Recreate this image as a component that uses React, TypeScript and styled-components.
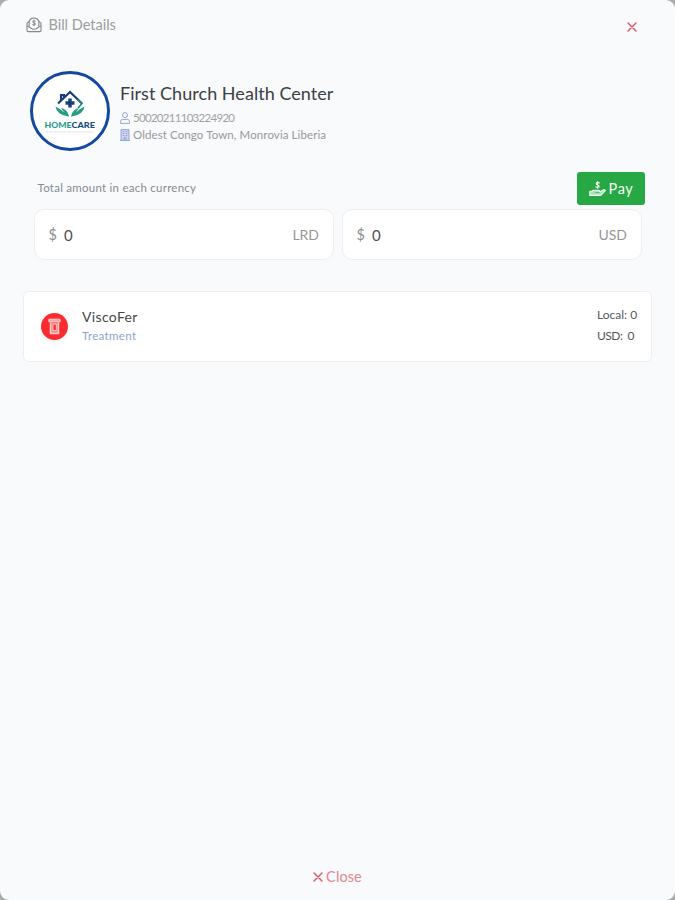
import React from 'react';
import styled, { createGlobalStyle } from 'styled-components';

const GlobalStyle = createGlobalStyle`
  * { box-sizing: border-box; }
  body { margin: 0; background: #a9abad; font-family: Lato, "Open Sans", sans-serif; }
  svg { display: block; flex: none; }
`;

const Modal = styled.main`
  width: 675px;
  height: 900px;
  display: flex;
  flex-direction: column;
  background: #f8fafc;
  border-radius: 9px;
  overflow: hidden;
`;

const Text = styled.span<{ $size: number; $color: string; $spacing?: number }>`
  margin: 0;
  font-size: ${p => p.$size}px;
  line-height: 1;
  color: ${p => p.$color};
  letter-spacing: ${p => p.$spacing ?? 0}px;
  font-weight: 400;
  white-space: pre;
`;

const Header = styled.header`
  height: 50px;
  display: flex;
  align-items: center;
  padding: 0 38px 0 26px;
  gap: 6.5px;
`;

const IconButton = styled.button`
  margin: 3px 0 0 auto;
  padding: 0;
  border: 0;
  background: none;
`;

const Provider = styled.section`
  height: 122px;
  padding: 21px 30px 0;
  display: flex;
  gap: 10px;
`;

const Avatar = styled.div`
  width: 80px;
  height: 80px;
  border-radius: 50%;
  border: 3px solid #1548a0;
  background: #fff;
  display: flex;
  justify-content: center;
  align-items: center;
`;

const ProviderInfo = styled.div`
  display: flex;
  flex-direction: column;
  padding-top: 13px;
`;

const InfoLine = styled.div<{ $top: number }>`
  height: 13px;
  margin-top: ${p => p.$top}px;
  display: flex;
  align-items: center;
  gap: 3px;
`;

const TotalsHeader = styled.div`
  height: 33px;
  padding: 0 30px 0 37.5px;
  display: flex;
  align-items: center;
  justify-content: space-between;
`;

const TotalsLabel = styled.div`
  display: flex;
  padding-bottom: 2px;
`;

const PayButton = styled.button`
  width: 68px;
  height: 33px;
  border: 0;
  border-radius: 3px;
  padding: 1px 0 0;
  font-family: inherit;
  background: #28a745;
  display: flex;
  align-items: center;
  justify-content: center;
  gap: 3px;
`;

const Totals = styled.div`
  display: grid;
  grid-template-columns: 1fr 1fr;
  gap: 8px;
  padding: 4px 33px 0 34px;
`;

const Amount = styled.div`
  height: 51px;
  display: flex;
  align-items: center;
  gap: 7px;
  padding: 1px 14px 0 13.5px;
  background: #fff;
  border: 1px solid #eceeef;
  border-radius: 10px;
`;

const Currency = styled.div`
  margin-left: auto;
  display: flex;
`;

const BillItem = styled.article`
  margin: 31px 23px 0;
  height: 71px;
  display: flex;
  align-items: center;
  padding: 0 14px 0 17px;
  background: #fff;
  border: 1px solid #eceeef;
  border-radius: 6px;
`;

const ItemBadge = styled.div`
  width: 27px;
  height: 27px;
  border-radius: 50%;
  background: #fb2c30;
  box-shadow: 0 2px 5px #0000000c;
  display: flex;
  align-items: center;
  justify-content: center;
`;

const ItemName = styled.div`
  margin-left: 14px;
  display: flex;
  flex-direction: column;
  gap: 6px;
  padding-bottom: 2px;
`;

const ItemPrices = styled.div`
  margin-left: auto;
  width: 40px;
  display: flex;
  flex-direction: column;
  gap: 9px;
  padding-bottom: 3px;
`;

const Footer = styled.footer`
  margin-top: auto;
  height: 46px;
  display: flex;
  justify-content: center;
  align-items: center;
  gap: 3px;
`;

const BillIcon = () => (
  <svg width="16" height="16" viewBox="0 0 16 16" fill="none" stroke="#85888b" strokeWidth="1.1" strokeLinejoin="round">
    <path d="M3.2 4.3 1 6.2v7.2q0 1.2 1.2 1.2h11.6q1.2 0 1.2-1.2V6.2l-2.2-1.9" />
    <path d="M1 8.7l5.5 3.2q1.5.8 3 0L15 8.7" />
    <path d="M3.2 9.5V4Q4.4 1 8 1t4.8 3v5.5" />
    <path d="M9.6 4.2C8.8 3.3 6.6 3.5 6.7 4.8c.1 1.4 2.8.8 2.8 2.2 0 1.3-2.2 1.4-3.1.5M8 2.8v6.3" strokeWidth="1" />
  </svg>
);

const CrossIcon = ({ size }: { size: number }) => (
  <svg width={size} height={size} viewBox="0 0 10 10" fill="none" stroke="#e2515f" strokeWidth="1.4" strokeLinecap="round">
    <path d="M1 1l8 8M9 1 1 9" />
  </svg>
);

const UserIcon = () => (
  <svg width="10" height="12" viewBox="0 0 10 12" fill="none" stroke="#8e9cd4" strokeWidth=".9">
    <circle cx="5" cy="3.1" r="2.5" />
    <path d="M.5 11.4V9.6q0-2.3 2.4-2.3Q5 8 7.1 7.3q2.4 0 2.4 2.3v1.8z" strokeLinejoin="round" />
  </svg>
);

const BuildingIcon = () => (
  <svg width="10" height="12" viewBox="0 0 10 12" fill="none" stroke="#8495cf" strokeWidth=".8">
    <path d="M0 11.5h10M1 11.5V.6h8v10.9" fill="#cdd5f0" />
    <path d="M2.7 2.5h1.5M5.8 2.5h1.5M2.7 4.5h1.5M5.8 4.5h1.5M2.7 6.5h1.5M5.8 6.5h1.5M4 11.5V8.7h2v2.8" />
  </svg>
);

const PayIcon = () => (
  <svg width="17" height="16" viewBox="0 0 17 16" fill="none" stroke="#f4fff6" strokeWidth="1.1" strokeLinecap="round" strokeLinejoin="round">
    <path d="M10.3 1.9C9.4 1 7.1 1.2 7.2 2.7c.1 1.6 3 1 3 2.6 0 1.4-2.4 1.5-3.3.6M8.7.6v6.6" />
    <path d="M.8 10.2h2.1l1.5-1h5q1.2.1 1.1 1.2-.1.9-1.2.9H7.1h3l4.5-2.5q1.4-.4 1.7.8l-4 4.4-1.2.4H.8z" fill="#f4fff6" fillOpacity=".65" />
    <path d="M6.5 11.4h3.8" stroke="#28a745" strokeWidth=".8" />
  </svg>
);

const JarIcon = () => (
  <svg width="13" height="17" viewBox="0 0 13 17" fill="none" stroke="#ffd0cc" strokeWidth="1.5">
    <path d="M.9 1.2h11.2v2.7H.9z" fill="#ffaaa5" strokeWidth="1" />
    <path d="M2.5 4.5v11h8v-11" fill="#ff8a87" />
    <path d="M5 6.2h3.3v6.3H5z" fill="#f33339" strokeWidth=".8" />
  </svg>
);

const HomecareLogo = () => (
  <svg width="54" height="46" viewBox="0 0 54 46">
    <path d="M15 15.5 27 4l12 11.5M18 13V7.2h3v3" fill="none" stroke="#193d76" strokeWidth="2.2" />
    <path d="M34.5 11.5 39 15.5l-4 4.5" fill="none" stroke="#218c86" strokeWidth="1.6" />
    <path d="M27 10.5v9M22.5 15h9" stroke="#17417c" strokeWidth="3.5" />
    <path d="M12.5 18.5q1 8.5 13.5 10.2-.8-5.4-5.4-8l-2.6-.4 3.5 4.4q-3.2-3.4-9-6.2zM41.5 18.5q-1 8.5-13.5 10.2.8-5.4 5.4-8l2.6-.4-3.5 4.4q3.2-3.4 9-6.2z" fill="#269b83" />
    <text x="1.5" y="40" textLength="27" lengthAdjust="spacingAndGlyphs" fontFamily="Lato" fontWeight="900" fontSize="8" fill="#279a8e">HOME</text>
    <text x="28.5" y="40" textLength="23.5" lengthAdjust="spacingAndGlyphs" fontFamily="Lato" fontWeight="900" fontSize="8" fill="#184b7d">CARE</text>
    <path d="M3 43.9h48" stroke="#cbd7df" strokeWidth=".9" strokeDasharray="2 .8 1 .6" />
  </svg>
);

export default function App() {
  return (
    <>
      <GlobalStyle />
      <Modal>
        <Header>
          <BillIcon />
          <Text $size={14.5} $color="#9b9da0">Bill Details</Text>
          <IconButton aria-label="Close dialog"><CrossIcon size={10} /></IconButton>
        </Header>
        <Provider>
          <Avatar><HomecareLogo /></Avatar>
          <ProviderInfo>
            <Text as="h1" $size={18} $color="#3d4043" $spacing={0.04}>First Church Health Center</Text>
            <InfoLine $top={9}>
              <UserIcon />
              <Text $size={11.5} $color="#a0a2a5" $spacing={-0.71}>50020211103224920</Text>
            </InfoLine>
            <InfoLine $top={4}>
              <BuildingIcon />
              <Text $size={11.5} $color="#97999c" $spacing={0.1}>Oldest Congo Town, Monrovia Liberia</Text>
            </InfoLine>
          </ProviderInfo>
        </Provider>
        <TotalsHeader>
          <TotalsLabel><Text $size={11.5} $color="#898c8f" $spacing={0.25}>Total amount in each currency</Text></TotalsLabel>
          <PayButton>
            <PayIcon />
            <Text $size={14.5} $color="#f4fff6" $spacing={0.6}>Pay</Text>
          </PayButton>
        </TotalsHeader>
        <Totals>
          {['LRD', 'USD'].map(code => (
            <Amount key={code}>
              <Text $size={14.5} $color="#8d8f91">$</Text>
              <Text $size={15} $color="#4d4f51">0</Text>
              <Currency><Text $size={14} $color="#949698">{code}</Text></Currency>
            </Amount>
          ))}
        </Totals>
        <BillItem>
          <ItemBadge><JarIcon /></ItemBadge>
          <ItemName>
            <Text $size={14} $color="#45484a" $spacing={0.35}>ViscoFer</Text>
            <Text $size={11.5} $color="#8da4cf" $spacing={0.35}>Treatment</Text>
          </ItemName>
          <ItemPrices>
            <Text $size={12} $color="#56585a">Local: 0</Text>
            <Text $size={12} $color="#56585a" $spacing={-0.5}>USD:  0</Text>
          </ItemPrices>
        </BillItem>
        <Footer>
          <CrossIcon size={10} />
          <Text $size={14.5} $color="#e78591" $spacing={0.1}>Close</Text>
        </Footer>
      </Modal>
    </>
  );
}
